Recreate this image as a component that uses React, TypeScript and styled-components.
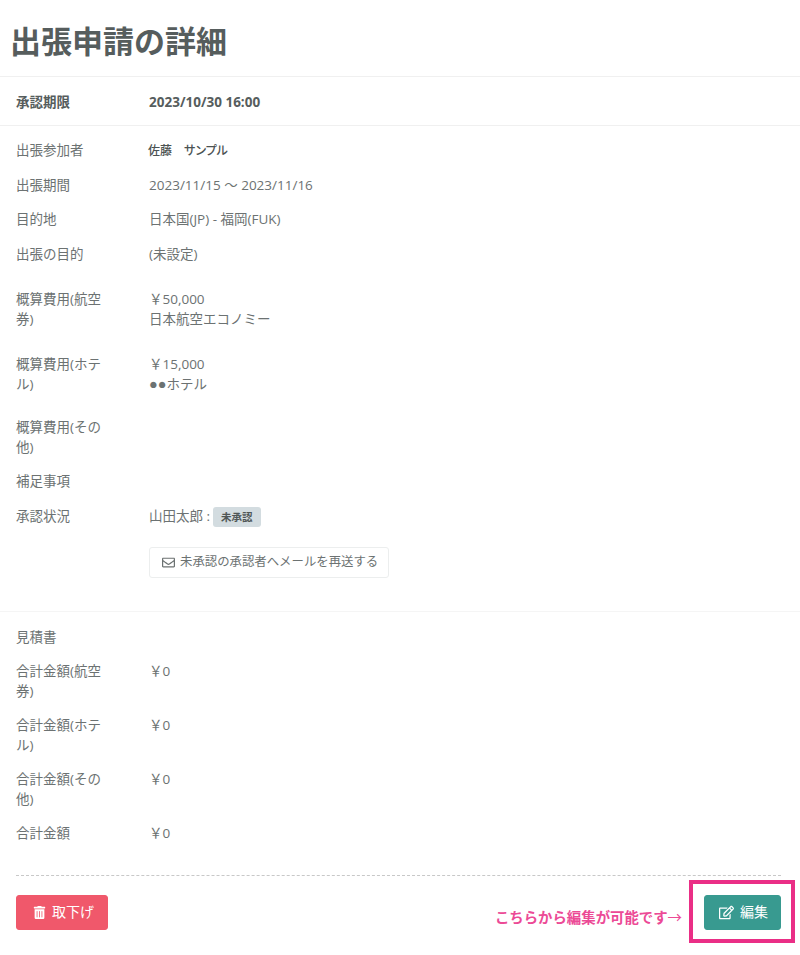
import React from "react";
import styled, { createGlobalStyle } from "styled-components";
import { FaRegEdit, FaRegEnvelope, FaTrashAlt } from "react-icons/fa";

const GlobalStyle = createGlobalStyle`
  html, body {
    margin: 0;
    padding: 0;
    background: #fff;
  }
  body {
    font-family: "Open Sans", "Noto Sans CJK JP", sans-serif;
    font-size: 13.5px;
    line-height: 19.5px;
    color: #6c7272;
  }
`;

const Page = styled.div`
  position: relative;
  width: 800px;
  height: 955px;
  overflow: hidden;
`;

const Title = styled.h1`
  margin: 0;
  height: 77px;
  padding: 20px 0 0 10px;
  box-sizing: border-box;
  font-size: 31px;
  line-height: 42px;
  font-weight: 700;
  color: #565d5d;
  border-bottom: 1px solid #f0f0f0;
`;

const Deadline = styled.div`
  display: flex;
  align-items: center;
  height: 49px;
  padding: 3px 0 0 16px;
  box-sizing: border-box;
  border-bottom: 1px solid #f0f0f0;
  font-size: 13.5px;
  font-weight: 700;
  color: #565d5d;
`;

const DeadlineValue = styled.div`
  font-size: 13.5px;
`;

const Section = styled.section<{ $top: number; $bottom: number; $line?: boolean }>`
  padding: ${(p) => p.$top}px 16px ${(p) => p.$bottom}px;
  border-bottom: ${(p) => (p.$line ? "1px solid #f5f5f5" : "none")};
`;

const Row = styled.div<{ $after?: number }>`
  display: flex;
  margin-bottom: ${(p) => p.$after ?? 15}px;
`;

const Label = styled.div`
  flex: none;
  width: 100px;
  margin-right: 33px;
`;

const Value = styled.div`
  flex: 1;
`;

const Person = styled.span`
  margin-left: -1px;
  font-size: 12px;
  font-weight: 500;
  font-feature-settings: "palt";
  color: #4b5252;
`;

const Dots = styled.span`
  font-family: "Liberation Sans", sans-serif;
  font-size: 14.5px;
`;

const Badge = styled.span`
  display: inline-block;
  margin-left: 3px;
  padding: 0 8px;
  height: 20px;
  border-radius: 3px;
  background: #d3dce0;
  color: #4f5656;
  font-size: 10.5px;
  font-weight: 700;
  line-height: 21px;
  vertical-align: top;
`;

const MailButton = styled.button`
  display: flex;
  align-items: center;
  gap: 5px;
  height: 31px;
  margin: 0 0 0 133px;
  padding: 0 10px 0 12px;
  box-sizing: border-box;
  background: #fff;
  border: 1px solid #eceeee;
  border-radius: 3px;
  color: #6c7272;
  font: inherit;
  font-size: 12.4px;
`;

const Footer = styled.div`
  display: flex;
  align-items: center;
  justify-content: space-between;
  margin: 0 19px 0 16px;
  padding-top: 19px;
  border-top: 1px dashed #c8c8c8;
`;

const ActionButton = styled.button<{ $color: string }>`
  display: flex;
  align-items: center;
  gap: 6px;
  height: 35px;
  padding: 0 13px 0 16px;
  background: ${(p) => p.$color};
  border: 1px solid ${(p) => p.$color};
  border-radius: 3px;
  color: #fff;
  font: inherit;
  font-size: 14px;
`;

const EditButton = styled(ActionButton)`
  padding: 0 12px 0 14px;
`;

const EditArea = styled.div`
  display: flex;
  align-items: center;
  gap: 22px;
`;

const Hint = styled.span`
  position: relative;
  top: 6px;
  font-size: 14.4px;
  font-weight: 700;
  color: #ec4a96;
`;

const Arrow = styled.span`
  font-weight: 400;
`;

const Highlight = styled.div`
  position: absolute;
  left: 689px;
  top: 880px;
  width: 106px;
  height: 63px;
  box-sizing: border-box;
  border: 4px solid #ea2e86;
`;

export default function App() {
  return (
    <Page>
      <GlobalStyle />
      <Title>出張申請の詳細</Title>
      <Deadline>
        <Label>承認期限</Label>
        <DeadlineValue>2023/10/30 16:00</DeadlineValue>
      </Deadline>
      <Section $top={15} $bottom={33} $line>
        <Row>
          <Label>出張参加者</Label>
          <Value>
            <Person>佐藤　サンプル</Person>
          </Value>
        </Row>
        <Row>
          <Label>出張期間</Label>
          <Value>2023/11/15 ～ 2023/11/16</Value>
        </Row>
        <Row>
          <Label>目的地</Label>
          <Value>日本国(JP) - 福岡(FUK)</Value>
        </Row>
        <Row $after={26}>
          <Label>出張の目的</Label>
          <Value>(未設定)</Value>
        </Row>
        <Row $after={26}>
          <Label>概算費用(航空券)</Label>
          <Value>
            ￥50,000
            <br />
            日本航空エコノミー
          </Value>
        </Row>
        <Row $after={24}>
          <Label>概算費用(ホテル)</Label>
          <Value>
            ￥15,000
            <br />
            <Dots>●●</Dots>ホテル
          </Value>
        </Row>
        <Row>
          <Label>概算費用(その他)</Label>
          <Value />
        </Row>
        <Row>
          <Label>補足事項</Label>
          <Value />
        </Row>
        <Row $after={20}>
          <Label>承認状況</Label>
          <Value>
            山田太郎 :<Badge>未承認</Badge>
          </Value>
        </Row>
        <MailButton>
          <FaRegEnvelope size={13} />
          未承認の承認者へメールを再送する
        </MailButton>
      </Section>
      <Section $top={16} $bottom={16}>
        <Row>
          <Label>見積書</Label>
        </Row>
        <Row>
          <Label>合計金額(航空券)</Label>
          <Value>￥0</Value>
        </Row>
        <Row>
          <Label>合計金額(ホテル)</Label>
          <Value>￥0</Value>
        </Row>
        <Row>
          <Label>合計金額(その他)</Label>
          <Value>￥0</Value>
        </Row>
        <Row>
          <Label>合計金額</Label>
          <Value>￥0</Value>
        </Row>
      </Section>
      <Footer>
        <ActionButton $color="#f0586b">
          <FaTrashAlt size={13} />
          取下げ
        </ActionButton>
        <EditArea>
          <Hint>
            こちらから編集が可能です<Arrow>→</Arrow>
          </Hint>
          <EditButton $color="#389a90">
            <FaRegEdit size={15} />
            編集
          </EditButton>
        </EditArea>
      </Footer>
      <Highlight />
    </Page>
  );
}
